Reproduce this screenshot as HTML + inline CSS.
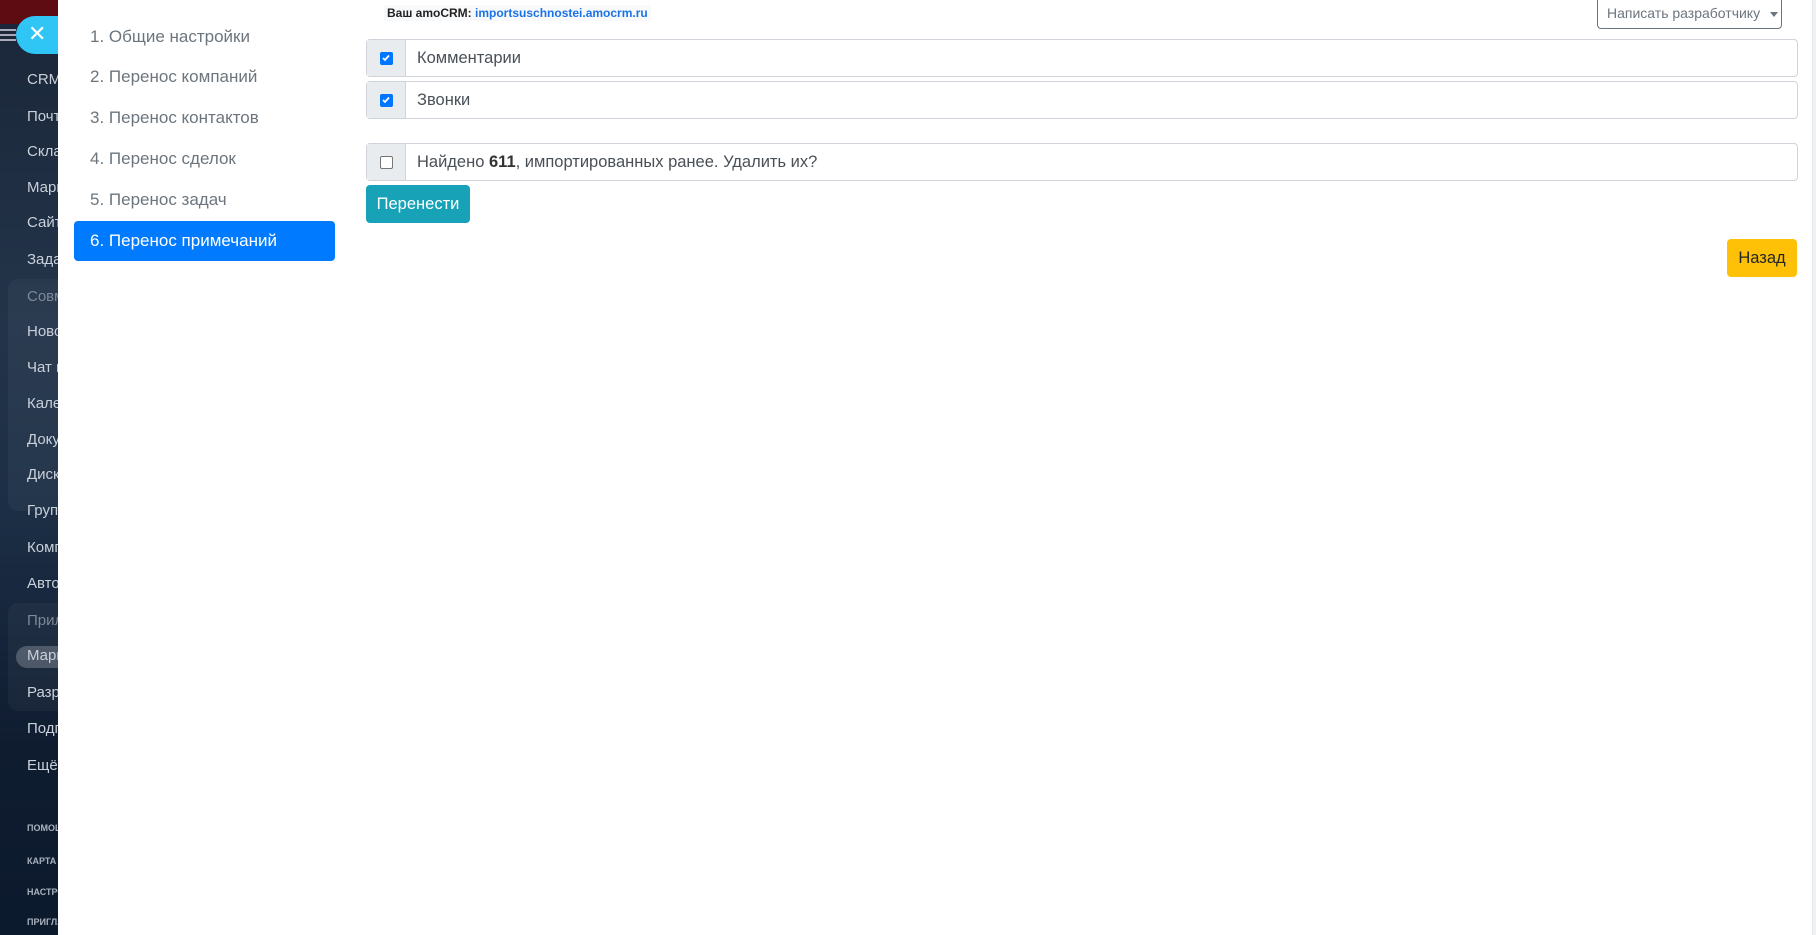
<!DOCTYPE html>
<html><head><meta charset="utf-8"><style>
*{box-sizing:border-box;margin:0;padding:0}
body{width:1816px;height:935px;overflow:hidden;font-family:"Liberation Sans","DejaVu Sans",sans-serif;background:#fff;position:relative}
#side{position:absolute;left:0;top:0;width:58px;height:935px;background:linear-gradient(180deg,#1a2638 0%,#23344a 35%,#1c2e45 55%,#0f1c30 80%,#0c1a2e 100%);overflow:hidden}
#side .top{position:absolute;left:0;top:0;width:58px;height:24px;background:#5e0c12}
#side .it{position:absolute;left:27px;color:#c9d0da;font-size:15px;white-space:nowrap;line-height:20px}
#side .sm{font-size:9px;font-weight:bold;color:#a9b1bd;left:27px}
#side .grp{position:absolute;left:8px;width:60px;background:rgba(255,255,255,0.04);border-radius:10px}
#close{position:absolute;left:16px;top:16px;width:60px;height:38px;border-radius:19px;background:#2fc6f6;color:#fff;font-size:22px;line-height:36px;padding-left:12px}
#panel{position:absolute;left:58px;top:0;width:1754px;height:935px;background:#fff}
#edge{position:absolute;left:1812px;top:0;width:4px;height:935px;background:#f0f1f3;border-left:1px solid #e3e5e8}
.nav{position:absolute;left:16px;width:261px;height:40px;border-radius:4px;color:#6c757d;font-size:17px;line-height:40px;padding-left:16px}
.nav.act{background:#007bff;color:#fff}
.row{position:absolute;left:308px;width:1432px;height:38px;border:1px solid #ced4da;border-radius:4px;display:flex;font-size:16.5px;color:#495057}
.row .ad{width:39px;background:#e9ecef;border-right:1px solid #ced4da;display:flex;align-items:center;justify-content:center}
.row .tx{padding-left:11px;line-height:36px}
.cb{width:13px;height:13px;border-radius:2px;background:#0075ff;display:flex;align-items:center;justify-content:center}
.cb.off{background:#fff;border:1px solid #767676}
</style></head><body>
<div id="side">
<div class="top"></div>
<div style="position:absolute;left:0;top:29px;width:16px;height:2px;background:#aab;box-shadow:0 5px 0 #aab,0 10px 0 #aab"></div>
<div class="grp" style="top:279px;height:232px"></div>
<div class="grp" style="top:603px;height:108px"></div>
<div style="position:absolute;left:16px;top:646px;width:60px;height:22px;border-radius:11px;background:rgba(255,255,255,0.22)"></div>
<div class="it" style="top:70px">CRM</div>
<div class="it" style="top:107px">Почта</div>
<div class="it" style="top:142px">Склад</div>
<div class="it" style="top:178px">Маркет</div>
<div class="it" style="top:213px">Сайты</div>
<div class="it" style="top:250px">Задачи</div>
<div class="it" style="top:287px;color:#7d8898">Совм</div>
<div class="it" style="top:322px">Новости</div>
<div class="it" style="top:358px">Чат и</div>
<div class="it" style="top:394px">Календарь</div>
<div class="it" style="top:430px">Документы</div>
<div class="it" style="top:465px">Диск</div>
<div class="it" style="top:501px">Группы</div>
<div class="it" style="top:538px">Компания</div>
<div class="it" style="top:574px">Автоматизация</div>
<div class="it" style="top:611px;color:#7d8898">Приложения</div>
<div class="it" style="top:646px">Маркет</div>
<div class="it" style="top:683px">Разработчикам</div>
<div class="it" style="top:719px">Подписка</div>
<div class="it" style="top:756px">Ещё</div>
<div class="it sm" style="top:818px">ПОМОЩЬ</div>
<div class="it sm" style="top:851px">КАРТА</div>
<div class="it sm" style="top:882px">НАСТРОЙКИ</div>
<div class="it sm" style="top:912px">ПРИГЛАСИТЬ</div>
</div>
<div id="close">✕</div>
<div id="panel">
<div class="nav" style="top:17px">1. Общие настройки</div>
<div class="nav" style="top:57px">2. Перенос компаний</div>
<div class="nav" style="top:98px">3. Перенос контактов</div>
<div class="nav" style="top:139px">4. Перенос сделок</div>
<div class="nav" style="top:180px">5. Перенос задач</div>
<div class="nav act" style="top:221px">6. Перенос примечаний</div>
<div style="position:absolute;left:326px;top:5px;font-size:12px;font-weight:bold;color:#222;background:#f8f9fa;padding:0 3px;line-height:16px">Ваш amoCRM: <span style="color:#1a73e8">importsuschnostei.amocrm.ru</span></div>
<div style="position:absolute;left:1539px;top:-4px;width:185px;height:33px;border:1px solid #6c757d;border-radius:4px;color:#6c757d;font-size:14px;line-height:33px;padding-left:9px">Написать разработчику <span style="display:inline-block;width:0;height:0;border-left:4px solid transparent;border-right:4px solid transparent;border-top:5px solid #6c757d;margin-left:6px;vertical-align:middle"></span></div>
<div class="row" style="top:39px"><div class="ad"><div class="cb"><svg width="10" height="10" viewBox="0 0 10 10"><path d="M2 5l2 2 4-4.5" stroke="#fff" stroke-width="1.8" fill="none"/></svg></div></div><div class="tx">Комментарии</div></div>
<div class="row" style="top:81px"><div class="ad"><div class="cb"><svg width="10" height="10" viewBox="0 0 10 10"><path d="M2 5l2 2 4-4.5" stroke="#fff" stroke-width="1.8" fill="none"/></svg></div></div><div class="tx">Звонки</div></div>
<div class="row" style="top:143px"><div class="ad"><div class="cb off"></div></div><div class="tx">Найдено <b style="color:#333">611</b>, импортированных ранее. Удалить их?</div></div>
<div style="position:absolute;left:308px;top:185px;width:104px;height:38px;border-radius:4px;background:#17a2b8;color:#fff;font-size:16.5px;line-height:38px;text-align:center">Перенести</div>
<div style="position:absolute;left:1669px;top:239px;width:70px;height:38px;border-radius:4px;background:#ffc107;color:#212529;font-size:16.5px;line-height:38px;text-align:center">Назад</div>
</div>
<div id="edge"></div>
</body></html>
